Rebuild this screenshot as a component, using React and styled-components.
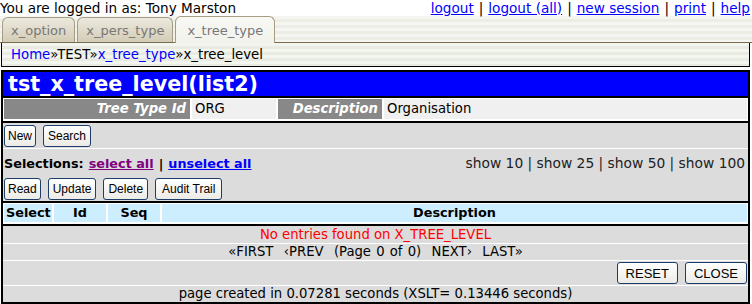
import React from 'react'
import styled, { createGlobalStyle } from 'styled-components'

const GlobalStyle = createGlobalStyle`
  body {
    margin: 0;
    background: #fff;
    font-family: 'DejaVu Sans', Verdana, sans-serif;
    font-size: 13.2px;
    color: #000;
  }
`

const Page = styled.div`
  width: 752px;
`

const TopBar = styled.div`
  display: flex;
  justify-content: space-between;
  align-items: center;
  height: 16px;
  font-size: 13.6px;
  line-height: 16px;
`

const TopLinks = styled.div`
  display: flex;
  gap: 5px;
  padding-right: 2px;
`

const TopLink = styled.a`
  color: #0000ff;
  text-decoration: underline;
`

const TabBar = styled.div`
  display: flex;
  align-items: flex-end;
  gap: 2px;
  height: 26px;
  padding-left: 2px;
  border-bottom: 1px solid #7a6a50;
  background: repeating-linear-gradient(180deg, #f5f6f1 0 3px, #eceee6 3px 6px);
`

const Tab = styled.div`
  height: ${p => (p.$active ? '26px' : '24px')};
  margin-bottom: ${p => (p.$active ? '-1px' : '0')};
  padding: 0 ${p => (p.$active ? 11 : 8)}px;
  display: flex;
  align-items: center;
  border: 1px solid #a59c82;
  border-bottom: none;
  border-radius: 6px 6px 0 0;
  color: #777;
  font-size: 13px;
  background: ${p =>
    p.$active
      ? 'linear-gradient(180deg, #f8f8f4, #f2f2ec)'
      : 'linear-gradient(180deg, #ece9de, #d3ccb6)'};
`

const Breadcrumb = styled.div`
  margin: 0 2px 0 1px;
  height: 23px;
  padding-left: 9px;
  display: flex;
  align-items: center;
  border: 1px solid #000;
  border-top: none;
  font-size: 13.3px;
  background: repeating-linear-gradient(180deg, #f3f5ef 0 3px, #e9ebe3 3px 6px);
`

const Crumb = styled.a`
  color: #0000ff;
  text-decoration: none;
`

const Main = styled.div`
  margin: 3px 2px 0 1px;
  border: 2px solid #000;
  background: #dcdcdc;
`

const Title = styled.div`
  background: #0000ff;
  color: #fff;
  font-weight: bold;
  font-size: 20.7px;
  height: 24px;
  line-height: 24px;
  padding-left: 5px;
  border-bottom: 2px solid #000;
`

const Section = styled.div`
  border-bottom: ${p => (p.$last ? 'none' : '2px solid #000')};
  background: #dcdcdc;
`

const LabelRow = styled.div`
  display: grid;
  grid-template-columns: 186px 84px 104px 1fr;
  gap: 2px;
  padding: 1px 1px 2px;
  background: #fff;
`

const Label = styled.div`
  background: #888;
  color: #fff;
  font-style: italic;
  font-weight: bold;
  text-align: right;
  padding-right: 4px;
  height: 20px;
  line-height: 20px;
`

const Value = styled.div`
  background: #f0f0f0;
  padding-left: 3px;
  height: 20px;
  line-height: 20px;
`

const Line = styled.div`
  display: flex;
  align-items: center;
  gap: 7px;
  padding: 0 1px;
  height: ${p => p.$h || 16}px;
  justify-content: ${p => p.$justify || 'flex-start'};
  border-bottom: ${p => (p.$sep ? '1px solid #fff' : 'none')};
`

const Button = styled.button`
  font-family: 'Liberation Sans', Arial, sans-serif;
  font-size: ${p => (p.$big ? '13px' : '12px')};
  height: 22px;
  padding: 0 ${p => p.$pad || 4}px;
  border: 1px solid #1d3d6b;
  border-radius: 3px;
  color: #000;
  background: linear-gradient(180deg, #ffffff, #ecebe6);
  cursor: pointer;
`

const Selections = styled.div`
  display: flex;
  justify-content: space-between;
  align-items: center;
  height: 26px;
  padding: 1px 3px 0 1px;
`

const SelLeft = styled.div`
  font-weight: bold;
  font-size: 12.8px;
  display: flex;
  gap: 5px;
`

const SelLink = styled.a`
  color: ${p => (p.$visited ? '#800080' : '#0000ff')};
  text-decoration: underline;
`

const ShowLinks = styled.div`
  color: #222;
  font-size: 13.8px;
`

const HeadRow = styled.div`
  display: grid;
  grid-template-columns: 48px 52px 52px 1fr;
  gap: 2px;
  padding: 1px 1px 2px;
  background: #fff;
`

const HeadCell = styled.div`
  background: #cdeeff;
  font-weight: bold;
  font-size: 12.8px;
  height: 18px;
  line-height: 18px;
  padding-left: ${p => (p.$left ? '2px' : '0')};
  text-align: ${p => (p.$left ? 'left' : 'center')};
`

const Message = styled.div`
  text-align: center;
  color: ${p => p.$color || '#000'};
  height: ${p => p.$h || 16}px;
  line-height: ${p => p.$h || 16}px;
  border-bottom: ${p => (p.$sep ? '1px solid #fff' : 'none')};
  word-spacing: ${p => p.$ws || 0}px;
`

export default function App() {
  return (
    <Page>
      <GlobalStyle />
      <TopBar>
        <span>You are logged in as: Tony Marston</span>
        <TopLinks>
          <TopLink>logout</TopLink>|<TopLink>logout (all)</TopLink>|
          <TopLink>new session</TopLink>|<TopLink>print</TopLink>|
          <TopLink>help</TopLink>
        </TopLinks>
      </TopBar>
      <TabBar>
        <Tab>x_option</Tab>
        <Tab>x_pers_type</Tab>
        <Tab $active>x_tree_type</Tab>
      </TabBar>
      <Breadcrumb>
        <Crumb>Home</Crumb>»TEST»<Crumb>x_tree_type</Crumb>»x_tree_level
      </Breadcrumb>
      <Main>
        <Title>tst_x_tree_level(list2)</Title>
        <Section>
          <LabelRow>
            <Label>Tree Type Id</Label>
            <Value>ORG</Value>
            <Label>Description</Label>
            <Value>Organisation</Value>
          </LabelRow>
        </Section>
        <Section>
          <Line $h={25} $sep>
            <Button $pad={3}>New</Button>
            <Button>Search</Button>
          </Line>
          <Selections>
            <SelLeft>
              Selections: <SelLink $visited>select all</SelLink>|<SelLink>unselect all</SelLink>
            </SelLeft>
            <ShowLinks>show 10 | show 25 | show 50 | show 100</ShowLinks>
          </Selections>
          <Line $h={25}>
            <Button $pad={3}>Read</Button>
            <Button>Update</Button>
            <Button>Delete</Button>
            <Button $pad={6}>Audit Trail</Button>
          </Line>
        </Section>
        <Section>
          <HeadRow>
            <HeadCell $left>Select</HeadCell>
            <HeadCell>Id</HeadCell>
            <HeadCell>Seq</HeadCell>
            <HeadCell>Description</HeadCell>
          </HeadRow>
        </Section>
        <Section $last>
          <Message $color="#ff0000" $h={17} $sep>No entries found on X_TREE_LEVEL</Message>
          <Message $sep $ws={1}>
            «FIRST&nbsp;&nbsp;‹PREV&nbsp;&nbsp;(Page 0 of 0)&nbsp;&nbsp;NEXT›&nbsp;&nbsp;LAST»
          </Message>
          <Line $h={24} $justify="flex-end" $sep>
            <Button $big $pad={8}>RESET</Button>
            <Button $big $pad={8}>CLOSE</Button>
          </Line>
          <Message>page created in 0.07281 seconds (XSLT= 0.13446 seconds)</Message>
        </Section>
      </Main>
    </Page>
  )
}
